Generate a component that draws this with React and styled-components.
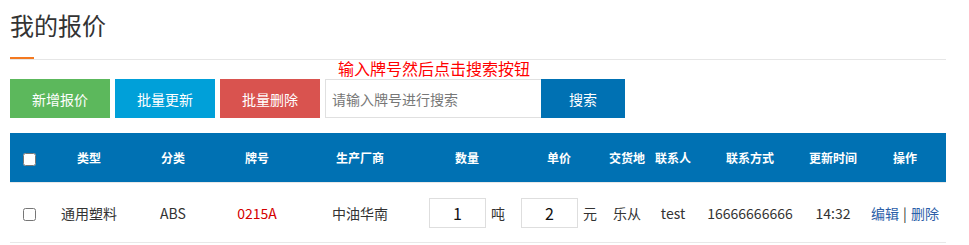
import React from 'react'
import styled, { createGlobalStyle } from 'styled-components'

const GlobalStyle = createGlobalStyle`
  html, body {
    margin: 0;
    padding: 0;
    background: #fff;
  }
  body {
    font-family: "Microsoft YaHei", "Noto Sans CJK SC", "Noto Sans", sans-serif;
    color: #333;
  }
`

const columns = [38, 82, 86, 82, 124, 90, 94, 42, 50, 104, 62, 82]
const headers = ['类型', '分类', '牌号', '生产厂商', '数量', '单价', '交货地', '联系人', '联系方式', '更新时间', '操作']

const rows = [
  {
    type: '通用塑料',
    category: 'ABS',
    grade: '0215A',
    maker: '中油华南',
    qty: '1',
    unit: '吨',
    price: '2',
    currency: '元',
    place: '乐从',
    contact: 'test',
    phone: '16666666666',
    time: '14:32',
  },
]

const App = () => {
  return (
    <Page>
      <GlobalStyle />
      <TitleBar>
        <Title>我的报价</Title>
        <Accent />
      </TitleBar>

      <Toolbar>
        <ActionButton $bg="#5cb85c">新增报价</ActionButton>
        <ActionButton $bg="#00a0d9">批量更新</ActionButton>
        <ActionButton $bg="#d9534f">批量删除</ActionButton>
        <SearchGroup>
          <Hint>输入牌号然后点击搜索按钮</Hint>
          <SearchRow>
            <SearchInput placeholder="请输入牌号进行搜索" />
            <SearchButton>搜索</SearchButton>
          </SearchRow>
        </SearchGroup>
      </Toolbar>

      <Table>
        <colgroup>
          {columns.map((w, i) => (
            <col key={i} style={{ width: w }} />
          ))}
        </colgroup>
        <thead>
          <tr>
            <Th>
              <Check type="checkbox" />
            </Th>
            {headers.map(h => (
              <Th key={h}>{h}</Th>
            ))}
          </tr>
        </thead>
        <tbody>
          {rows.map(r => (
            <tr key={r.grade}>
              <Td>
                <Check type="checkbox" />
              </Td>
              <Td>{r.type}</Td>
              <Td>{r.category}</Td>
              <Td $color="#d40000">{r.grade}</Td>
              <Td>{r.maker}</Td>
              <Td>
                <Amount>
                  <AmountInput defaultValue={r.qty} />
                  <Unit>{r.unit}</Unit>
                </Amount>
              </Td>
              <Td>
                <Amount>
                  <AmountInput defaultValue={r.price} />
                  <Unit>{r.currency}</Unit>
                </Amount>
              </Td>
              <Td>{r.place}</Td>
              <Td>{r.contact}</Td>
              <Td>{r.phone}</Td>
              <Td>{r.time}</Td>
              <Td>
                <Link>编辑</Link>
                <Sep>|</Sep>
                <Link>删除</Link>
              </Td>
            </tr>
          ))}
        </tbody>
      </Table>
    </Page>
  )
}

export default App

const Page = styled.div`
  width: 936px;
  padding: 0 10px;
`

const TitleBar = styled.div`
  border-bottom: 1px solid #e6e6e6;
`

const Title = styled.h2`
  margin: 0;
  padding: 8px 0 15px;
  font-size: 24px;
  line-height: 34px;
  font-weight: 400;
  color: #333;
`

const Accent = styled.div`
  width: 24px;
  height: 2px;
  background: #f47920;
`

const Toolbar = styled.div`
  display: flex;
  align-items: flex-end;
  gap: 5px;
`

const ActionButton = styled.button`
  width: 100px;
  height: 39px;
  border: none;
  padding: 0;
  background: ${p => p.$bg};
  color: #fff;
  font-family: inherit;
  font-size: 14px;
`

const SearchGroup = styled.div`
  display: flex;
  flex-direction: column;
`

const Hint = styled.div`
  padding-left: 13px;
  height: 19px;
  line-height: 16px;
  font-size: 16px;
  color: #f00;
`

const SearchRow = styled.div`
  display: flex;
`

const SearchInput = styled.input`
  box-sizing: border-box;
  width: 216px;
  height: 39px;
  border: 1px solid #e0e0e0;
  border-right: none;
  padding: 0 6px;
  font-family: inherit;
  font-size: 14px;
  outline: none;
  &::placeholder {
    color: #777;
  }
`

const SearchButton = styled.button`
  width: 84px;
  height: 39px;
  border: none;
  padding: 0;
  background: #0071b3;
  color: #fff;
  font-family: inherit;
  font-size: 14px;
`

const Table = styled.table`
  margin-top: 15px;
  width: 936px;
  table-layout: fixed;
  border-collapse: collapse;
`

const Th = styled.th`
  height: 49px;
  padding: 0;
  background: #0071b3;
  color: #fff;
  font-size: 12px;
  font-weight: 700;
  text-align: center;
  white-space: nowrap;
`

const Td = styled.td`
  height: 59px;
  padding: 0;
  border-top: 1px solid #e8e8e8;
  border-bottom: 1px solid #e8e8e8;
  font-size: 14px;
  color: ${p => p.$color || '#333'};
  text-align: center;
  white-space: nowrap;
`

const Check = styled.input`
  width: 13px;
  height: 13px;
  margin: 0;
  vertical-align: middle;
`

const Amount = styled.div`
  display: inline-flex;
  align-items: center;
  gap: 5px;
`

const AmountInput = styled.input`
  box-sizing: border-box;
  width: 57px;
  height: 30px;
  border: 1px solid #dedede;
  text-align: center;
  font-family: inherit;
  font-size: 16px;
  color: #111;
  outline: none;
`

const Unit = styled.span`
  font-size: 14px;
`

const Link = styled.a`
  color: #2b5ea8;
  cursor: pointer;
`

const Sep = styled.span`
  margin: 0 4px;
  color: #333;
`
